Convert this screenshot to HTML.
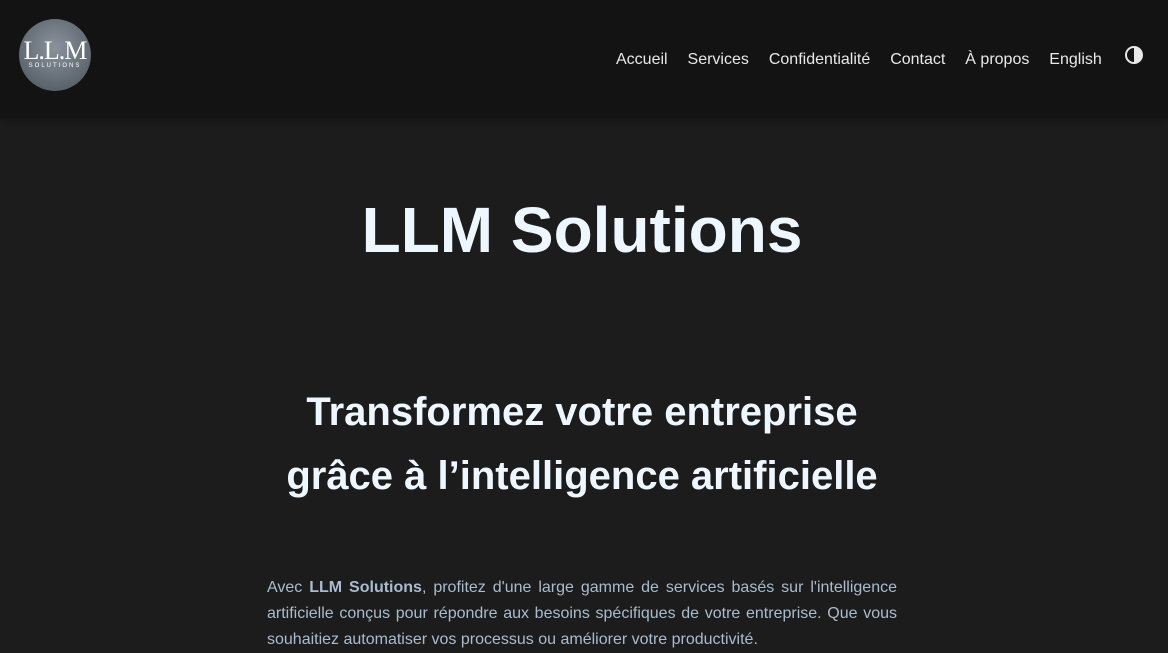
<!DOCTYPE html>
<html><head><meta charset="utf-8"><style>
*{margin:0;padding:0;box-sizing:border-box}
body{width:1168px;height:627px;overflow:hidden;background:#1c1c1c;font-family:"Liberation Sans",sans-serif}
header{height:118px;background:#131313;position:relative;box-shadow:0 2px 6px rgba(0,0,0,.3)}
.logo{position:absolute;left:19px;top:19px;width:72px;height:72px;border-radius:50%;background:radial-gradient(circle at 50% 40%,#8a939c,#5d666f 70%,#48505a);overflow:hidden;color:#fff;text-align:center;font-family:"Liberation Serif",serif}
.logo .b{position:absolute;top:17px;left:0;right:0;font-size:26px;letter-spacing:-1px}
.logo .s{position:absolute;top:44px;left:0;right:0;font-size:6px;letter-spacing:2px;font-family:"Liberation Sans",sans-serif}
nav{position:absolute;top:51px;left:616px;font-size:16px;color:#e8e8e8;white-space:nowrap}
nav span{margin-right:15.5px}
.tg{position:absolute;left:1125px;top:46px;width:18px;height:18px;border-radius:50%;border:2px solid #e8e8e8;background:linear-gradient(90deg,#131313 50%,#e8e8e8 50%)}
h1{position:absolute;top:193px;left:-2px;width:100%;text-align:center;font-size:64px;color:#eef6ff;font-weight:bold}
h2{position:absolute;top:380px;left:-2px;width:100%;text-align:center;font-size:40px;line-height:64px;color:#eef6ff;font-weight:bold}
p{position:absolute;top:575px;left:267px;width:630px;font-size:16px;line-height:26px;color:#a9bccf;text-align:justify}
</style></head><body>
<header><div class="logo"><div class="b">L.L.M</div><div class="s">SOLUTIONS</div></div>
<nav><span>Accueil</span> <span>Services</span> <span>Confidentialité</span> <span>Contact</span> <span>À propos</span> <span>English</span></nav>
<div class="tg"></div></header>
<h1>LLM Solutions</h1>
<h2>Transformez votre entreprise<br>grâce à l’intelligence artificielle</h2>
<p>Avec <b>LLM Solutions</b>, profitez d'une large gamme de services basés sur l'intelligence artificielle conçus pour répondre aux besoins spécifiques de votre entreprise. Que vous souhaitiez automatiser vos processus ou améliorer votre productivité.</p>
</body></html>
